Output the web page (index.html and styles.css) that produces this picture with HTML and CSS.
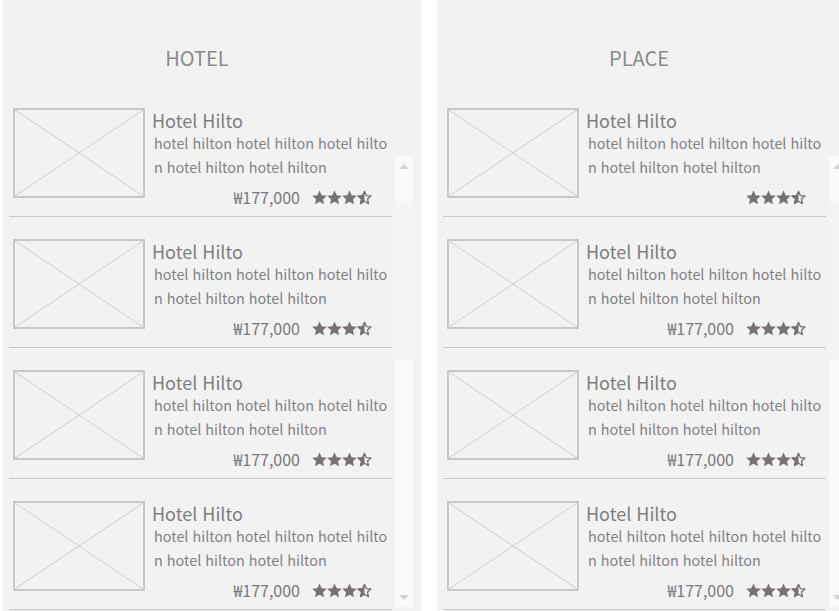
FILE: index.html
```html
<!DOCTYPE html>
<html lang="ko">
  <head>
    <meta charset="UTF-8" />
    <meta name="viewport" content="width=device-width, initial-scale=1.0" />
    <title>Hotel / Place</title>
    <link rel="stylesheet" href="styles.css">
  </head>
  <body class="body">
    <svg class="defs" aria-hidden="true">
      <symbol id="starFull" viewBox="2 2.3 20 19">
        <path d="M12 2.5l2.9 6.3 6.9.7-5.2 4.6 1.5 6.8L12 17.4 5.9 20.9l1.5-6.8-5.2-4.6 6.9-.7z" fill="currentColor" />
      </symbol>
      <symbol id="starHalf" viewBox="2 2.3 20 19">
        <path d="M12 3.6l2.5 5.6 6.1.6-4.6 4.1 1.3 6L12 16.8 6.7 19.9l1.3-6-4.6-4.1 6.1-.6z" fill="none" stroke="currentColor" stroke-width="1.8" stroke-linejoin="round" />
        <path d="M12 2.5v14.9L5.9 20.9l1.5-6.8-5.2-4.6 6.9-.7z" fill="currentColor" />
      </symbol>
      <symbol id="noImage" viewBox="0 0 128 86" preserveAspectRatio="none">
        <path d="M0 0L128 86M128 0L0 86" stroke="#cfcfcf" stroke-width="1" fill="none" />
      </symbol>
    </svg>

    <div class="page">
      <!-- HOTEL -->
      <section class="panel">
        <h2 class="panelTitle">HOTEL</h2>
        <ul class="list">
          <li class="item">
            <div class="thumb"><svg><use href="#noImage" /></svg></div>
            <div class="info">
              <p class="name">Hotel Hilto</p>
              <p class="desc">hotel hilton hotel hilton hotel hilto<br>n hotel hilton hotel hilton</p>
              <div class="meta">
                <span class="price">₩177,000</span>
                <span class="stars">
                  <svg><use href="#starFull" /></svg><svg><use href="#starFull" /></svg><svg><use href="#starFull" /></svg><svg><use href="#starHalf" /></svg>
                </span>
              </div>
            </div>
          </li>
          <li class="item">
            <div class="thumb"><svg><use href="#noImage" /></svg></div>
            <div class="info">
              <p class="name">Hotel Hilto</p>
              <p class="desc">hotel hilton hotel hilton hotel hilto<br>n hotel hilton hotel hilton</p>
              <div class="meta">
                <span class="price">₩177,000</span>
                <span class="stars">
                  <svg><use href="#starFull" /></svg><svg><use href="#starFull" /></svg><svg><use href="#starFull" /></svg><svg><use href="#starHalf" /></svg>
                </span>
              </div>
            </div>
          </li>
          <li class="item">
            <div class="thumb"><svg><use href="#noImage" /></svg></div>
            <div class="info">
              <p class="name">Hotel Hilto</p>
              <p class="desc">hotel hilton hotel hilton hotel hilto<br>n hotel hilton hotel hilton</p>
              <div class="meta">
                <span class="price">₩177,000</span>
                <span class="stars">
                  <svg><use href="#starFull" /></svg><svg><use href="#starFull" /></svg><svg><use href="#starFull" /></svg><svg><use href="#starHalf" /></svg>
                </span>
              </div>
            </div>
          </li>
          <li class="item">
            <div class="thumb"><svg><use href="#noImage" /></svg></div>
            <div class="info">
              <p class="name">Hotel Hilto</p>
              <p class="desc">hotel hilton hotel hilton hotel hilto<br>n hotel hilton hotel hilton</p>
              <div class="meta">
                <span class="price">₩177,000</span>
                <span class="stars">
                  <svg><use href="#starFull" /></svg><svg><use href="#starFull" /></svg><svg><use href="#starFull" /></svg><svg><use href="#starHalf" /></svg>
                </span>
              </div>
            </div>
          </li>
        </ul>
        <div class="scrollbar">
          <div class="scrollBtn"><span class="arrowUp"></span></div>
          <div class="scrollThumb"></div>
          <div class="scrollTrack"><span class="arrowDown"></span></div>
        </div>
      </section>

      <!-- PLACE -->
      <section class="panel">
        <h2 class="panelTitle placeTitle">PLACE</h2>
        <ul class="list">
          <li class="item">
            <div class="thumb"><svg><use href="#noImage" /></svg></div>
            <div class="info">
              <p class="name">Hotel Hilto</p>
              <p class="desc">hotel hilton hotel hilton hotel hilto<br>n hotel hilton hotel hilton</p>
              <div class="meta">
                <span class="stars">
                  <svg><use href="#starFull" /></svg><svg><use href="#starFull" /></svg><svg><use href="#starFull" /></svg><svg><use href="#starHalf" /></svg>
                </span>
              </div>
            </div>
          </li>
          <li class="item">
            <div class="thumb"><svg><use href="#noImage" /></svg></div>
            <div class="info">
              <p class="name">Hotel Hilto</p>
              <p class="desc">hotel hilton hotel hilton hotel hilto<br>n hotel hilton hotel hilton</p>
              <div class="meta">
                <span class="price">₩177,000</span>
                <span class="stars">
                  <svg><use href="#starFull" /></svg><svg><use href="#starFull" /></svg><svg><use href="#starFull" /></svg><svg><use href="#starHalf" /></svg>
                </span>
              </div>
            </div>
          </li>
          <li class="item">
            <div class="thumb"><svg><use href="#noImage" /></svg></div>
            <div class="info">
              <p class="name">Hotel Hilto</p>
              <p class="desc">hotel hilton hotel hilton hotel hilto<br>n hotel hilton hotel hilton</p>
              <div class="meta">
                <span class="price">₩177,000</span>
                <span class="stars">
                  <svg><use href="#starFull" /></svg><svg><use href="#starFull" /></svg><svg><use href="#starFull" /></svg><svg><use href="#starHalf" /></svg>
                </span>
              </div>
            </div>
          </li>
          <li class="item">
            <div class="thumb"><svg><use href="#noImage" /></svg></div>
            <div class="info">
              <p class="name">Hotel Hilto</p>
              <p class="desc">hotel hilton hotel hilton hotel hilto<br>n hotel hilton hotel hilton</p>
              <div class="meta">
                <span class="price">₩177,000</span>
                <span class="stars">
                  <svg><use href="#starFull" /></svg><svg><use href="#starFull" /></svg><svg><use href="#starFull" /></svg><svg><use href="#starHalf" /></svg>
                </span>
              </div>
            </div>
          </li>
        </ul>
        <div class="scrollbar">
          <div class="scrollBtn"><span class="arrowUp"></span></div>
          <div class="scrollThumb"></div>
          <div class="scrollTrack"><span class="arrowDown"></span></div>
        </div>
      </section>
    </div>
  </body>
</html>
```

FILE: styles.css
```css
.body {
  margin: 0;
  background-color: #ffffff;
  font-family: "Noto Sans CJK KR", "Noto Sans", sans-serif;
  overflow: hidden;
}
.defs {
  position: absolute;
  width: 0;
  height: 0;
}
.page {
  display: flex;
  gap: 16px;
  padding-left: 3px;
  height: 100vh;
}
.panel {
  position: relative;
  flex: 0 0 418px;
  height: 100%;
  background-color: #f2f2f2;
  overflow: hidden;
}
.panelTitle {
  box-sizing: border-box;
  height: 86px;
  margin: 0;
  padding: 45px 30px 0 0;
  text-align: center;
  font-size: 20px;
  line-height: 26px;
  font-weight: 400;
  color: #8a8a8a;
}
.placeTitle {
  padding-right: 14px;
}
.list {
  list-style: none;
  margin: 0;
  padding: 0;
  width: 389px;
}
.item {
  display: flex;
  align-items: flex-start;
  padding: 22px 0 7px 0;
  margin-left: 6px;
  border-bottom: 1px solid #c9c9c9;
}
.thumb {
  box-sizing: border-box;
  flex: 0 0 132px;
  height: 90px;
  margin-left: 4px;
  border: 2px solid #c8c8c8;
}
.thumb svg {
  display: block;
  width: 100%;
  height: 100%;
}
.info {
  flex: 1;
  margin-left: 7px;
  padding-top: 1px;
}
.name {
  margin: 0;
  font-size: 18px;
  line-height: 22px;
  color: #7e7e7e;
}
.desc {
  margin: 0;
  padding-left: 2px;
  font-size: 14.4px;
  line-height: 24px;
  color: #828282;
  white-space: nowrap;
}
.meta {
  display: flex;
  justify-content: flex-end;
  align-items: center;
  gap: 12px;
  height: 24px;
  margin-top: 6px;
  padding-right: 20px;
}
.price {
  font-size: 16px;
  color: #7a7a7a;
}
.stars {
  display: flex;
  gap: 0;
  color: #787272;
}
.stars svg {
  width: 15px;
  height: 15px;
}
.scrollbar {
  position: absolute;
  left: 392px;
  top: 156px;
  bottom: 4px;
  width: 18px;
  display: flex;
  flex-direction: column;
}
.scrollBtn {
  height: 45px;
  background-color: #fafaf8;
  display: flex;
  justify-content: center;
  padding-top: 8px;
  box-sizing: border-box;
}
.scrollThumb {
  height: 159px;
  background-color: #f4f4f4;
}
.scrollTrack {
  flex: 1;
  background-color: #f9f9f7;
  display: flex;
  justify-content: center;
  align-items: flex-end;
  padding-bottom: 7px;
}
.arrowUp {
  width: 0;
  height: 0;
  border-left: 5px solid transparent;
  border-right: 5px solid transparent;
  border-bottom: 5px solid #d2d2d2;
}
.arrowDown {
  width: 0;
  height: 0;
  border-left: 5px solid transparent;
  border-right: 5px solid transparent;
  border-top: 5px solid #d2d2d2;
}
```
